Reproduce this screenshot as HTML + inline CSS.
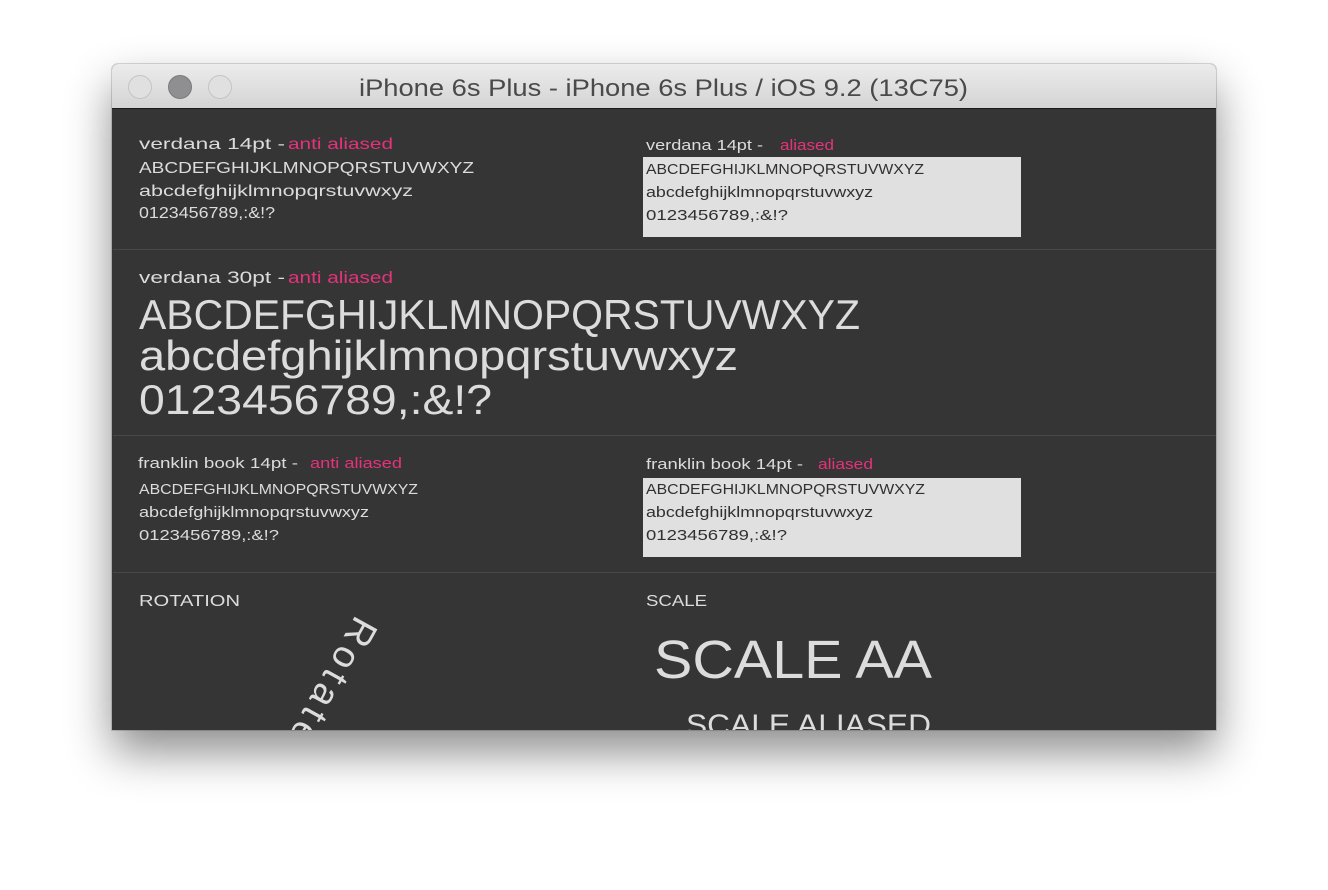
<!DOCTYPE html>
<html><head><meta charset="utf-8"><style>
html,body{margin:0;padding:0;background:#fff;width:1328px;height:890px;overflow:hidden}
.win{position:absolute;left:112px;top:64px;width:1104px;height:666px;border-radius:6px 6px 0 0;box-shadow:0 22px 45px rgba(0,0,0,0.45),0 0 0 1px rgba(0,0,0,0.15);overflow:hidden;background:#353535}
.tb{position:absolute;left:0;top:0;width:1104px;height:44px;background:linear-gradient(#ececec,#d4d4d4);border-bottom:1px solid #1a1a1a}
.dot{position:absolute;top:11px;width:24px;height:24px;border-radius:50%;background:#e0e0e0;border:1px solid #c4c4c4;box-sizing:border-box}
svg{position:absolute;left:0;top:0}
</style></head><body>
<div class="win">
<div class="tb">
<div class="dot" style="left:16px"></div>
<div class="dot" style="left:56px;background:#8f8f92;border-color:#7a7a7d"></div>
<div class="dot" style="left:96px"></div>
</div>
</div>
<svg width="1328" height="890" font-family="'Liberation Sans',sans-serif">
<defs><clipPath id="c"><rect x="0" y="0" width="1328" height="730"/></clipPath></defs>
<text x="359" y="96" font-size="24" fill="#4a4a4a" textLength="609" lengthAdjust="spacingAndGlyphs">iPhone 6s Plus - iPhone 6s Plus / iOS 9.2 (13C75)</text>
<g fill="#dcdcdc">
<text x="139" y="149" font-size="16" textLength="146" lengthAdjust="spacingAndGlyphs">verdana 14pt - </text>
<text x="139" y="173" font-size="16" textLength="335" lengthAdjust="spacingAndGlyphs">ABCDEFGHIJKLMNOPQRSTUVWXYZ</text>
<text x="139" y="196" font-size="16" textLength="274" lengthAdjust="spacingAndGlyphs">abcdefghijklmnopqrstuvwxyz</text>
<text x="139" y="218" font-size="16" textLength="136" lengthAdjust="spacingAndGlyphs">0123456789,:&amp;!?</text>
<text x="646" y="150" font-size="15" textLength="117" lengthAdjust="spacingAndGlyphs">verdana 14pt -</text>
<text x="139" y="283" font-size="17" textLength="146" lengthAdjust="spacingAndGlyphs">verdana 30pt - </text>
<text x="139" y="329" font-size="42" textLength="721" lengthAdjust="spacingAndGlyphs">ABCDEFGHIJKLMNOPQRSTUVWXYZ</text>
<text x="139" y="370" font-size="42" textLength="599" lengthAdjust="spacingAndGlyphs">abcdefghijklmnopqrstuvwxyz</text>
<text x="139" y="414" font-size="42" textLength="353" lengthAdjust="spacingAndGlyphs">0123456789,:&amp;!?</text>
<text x="138" y="468" font-size="15" textLength="160" lengthAdjust="spacingAndGlyphs">franklin book 14pt -</text>
<text x="139" y="494" font-size="15" textLength="279" lengthAdjust="spacingAndGlyphs">ABCDEFGHIJKLMNOPQRSTUVWXYZ</text>
<text x="139" y="517" font-size="15" textLength="230" lengthAdjust="spacingAndGlyphs">abcdefghijklmnopqrstuvwxyz</text>
<text x="139" y="540" font-size="15" textLength="140" lengthAdjust="spacingAndGlyphs">0123456789,:&amp;!?</text>
<text x="646" y="469" font-size="15" textLength="157" lengthAdjust="spacingAndGlyphs">franklin book 14pt -</text>
<text x="139" y="606" font-size="16" textLength="101" lengthAdjust="spacingAndGlyphs">ROTATION</text>
<text x="646" y="606" font-size="16" textLength="61" lengthAdjust="spacingAndGlyphs">SCALE</text>
<text x="654" y="678" font-size="54" textLength="278" lengthAdjust="spacingAndGlyphs">SCALE AA</text>
<g clip-path="url(#c)">
<text x="686" y="735" font-size="30" textLength="245" lengthAdjust="spacingAndGlyphs">SCALE ALIASED</text>
<text x="0" y="0" font-size="38" textLength="140" lengthAdjust="spacing" transform="translate(356,614) rotate(119)">Rotate</text>
</g>
</g>
<g fill="#e5327a">
<text x="288" y="149" font-size="16" textLength="105" lengthAdjust="spacingAndGlyphs">anti aliased</text>
<text x="780" y="150" font-size="15" textLength="54" lengthAdjust="spacingAndGlyphs">aliased</text>
<text x="288" y="283" font-size="17" textLength="105" lengthAdjust="spacingAndGlyphs">anti aliased</text>
<text x="310" y="468" font-size="15" textLength="92" lengthAdjust="spacingAndGlyphs">anti aliased</text>
<text x="818" y="469" font-size="15" textLength="55" lengthAdjust="spacingAndGlyphs">aliased</text>
</g>
<rect x="643" y="157" width="378" height="80" fill="#e0e0e0"/>
<rect x="643" y="478" width="378" height="79" fill="#e0e0e0"/>
<g fill="#303030">
<text x="646" y="174" font-size="15" textLength="278" lengthAdjust="spacingAndGlyphs">ABCDEFGHIJKLMNOPQRSTUVWXYZ</text>
<text x="646" y="197" font-size="15" textLength="227" lengthAdjust="spacingAndGlyphs">abcdefghijklmnopqrstuvwxyz</text>
<text x="646" y="220" font-size="15" textLength="142" lengthAdjust="spacingAndGlyphs">0123456789,:&amp;!?</text>
<text x="646" y="494" font-size="15" textLength="279" lengthAdjust="spacingAndGlyphs">ABCDEFGHIJKLMNOPQRSTUVWXYZ</text>
<text x="646" y="517" font-size="15" textLength="227" lengthAdjust="spacingAndGlyphs">abcdefghijklmnopqrstuvwxyz</text>
<text x="646" y="540" font-size="15" textLength="141" lengthAdjust="spacingAndGlyphs">0123456789,:&amp;!?</text>
</g>
<g fill="#484848">
<rect x="113" y="249" width="1103" height="1"/>
<rect x="113" y="435" width="1103" height="1"/>
<rect x="113" y="572" width="1103" height="1"/>
</g>
</svg>
</body></html>
